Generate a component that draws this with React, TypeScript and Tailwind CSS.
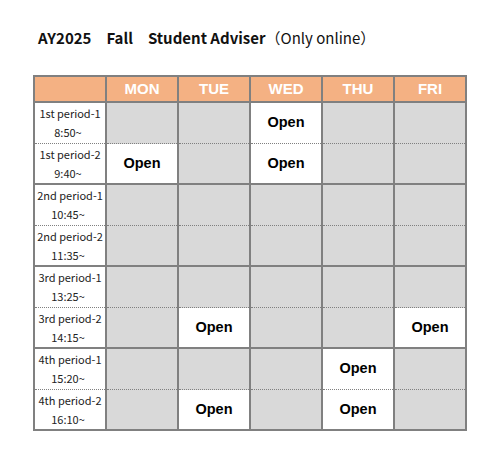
import React from 'react'

const days = ['MON', 'TUE', 'WED', 'THU', 'FRI']

interface Slot {
  label: string
  time: string
  open: string[]
}

const groups: Slot[][] = [
  [
    { label: '1st period-1', time: '8:50~', open: ['WED'] },
    { label: '1st period-2', time: '9:40~', open: ['MON', 'WED'] },
  ],
  [
    { label: '2nd period-1', time: '10:45~', open: [] },
    { label: '2nd period-2', time: '11:35~', open: [] },
  ],
  [
    { label: '3rd period-1', time: '13:25~', open: [] },
    { label: '3rd period-2', time: '14:15~', open: ['TUE', 'FRI'] },
  ],
  [
    { label: '4th period-1', time: '15:20~', open: ['THU'] },
    { label: '4th period-2', time: '16:10~', open: ['TUE', 'THU'] },
  ],
]

function LabelCell({ slot, top }: { slot: Slot; top: boolean }) {
  return (
    <div
      className={`flex flex-col items-center justify-center bg-white text-[11px] leading-[19px] text-[#222] font-['Noto_Sans_CJK_JP',sans-serif] ${
        top ? 'h-[41px] border-b border-dotted border-[#808080]' : 'h-[39px]'
      }`}
    >
      <span>{slot.label}</span>
      <span className="pr-[4px]">{slot.time}</span>
    </div>
  )
}

function DayCell({ open, top }: { open: boolean; top: boolean }) {
  return (
    <div
      className={`flex items-center justify-center ${open ? 'bg-white' : 'bg-[#d9d9d9]'} ${
        top ? 'h-[41px] border-b border-dotted border-[#808080]' : 'h-[39px]'
      }`}
    >
      {open && (
        <span className="text-[14.5px] font-bold text-black font-['Liberation_Sans',Arial,sans-serif]">
          Open
        </span>
      )}
    </div>
  )
}

export default function App() {
  return (
    <div className="w-[500px] h-[456px] bg-white pt-[28px]">
      {/* タイトル */}
      <h1 className="pl-[38px] text-[15px] leading-[20px] text-[#111] font-['Noto_Sans_CJK_JP',sans-serif]">
        <span className="font-bold">AY2025　Fall　Student Adviser</span>
        <span className="font-normal">（Only online）</span>
      </h1>

      <div className="ml-[33px] mt-[27px] w-[434px] flex flex-col gap-[2px] bg-[#808080] p-[2px]">
        {/* 表头 */}
        <div className="grid grid-cols-[repeat(6,70px)] gap-x-[2px]">
          <div className="h-[24px] bg-[#f4b183]" />
          {days.map((d) => (
            <div
              key={d}
              className="flex h-[24px] items-center justify-center bg-[#f4b183] text-[15px] font-bold text-white font-['Liberation_Sans',Arial,sans-serif]"
            >
              {d}
            </div>
          ))}
        </div>

        {groups.map((g, gi) => (
          <div key={gi} className="grid grid-cols-[repeat(6,70px)] gap-x-[2px]">
            <div className="flex flex-col">
              <LabelCell slot={g[0]} top />
              <LabelCell slot={g[1]} top={false} />
            </div>
            {days.map((d) => (
              <div key={d} className="flex flex-col">
                <DayCell open={g[0].open.includes(d)} top />
                <DayCell open={g[1].open.includes(d)} top={false} />
              </div>
            ))}
          </div>
        ))}
      </div>
    </div>
  )
}
